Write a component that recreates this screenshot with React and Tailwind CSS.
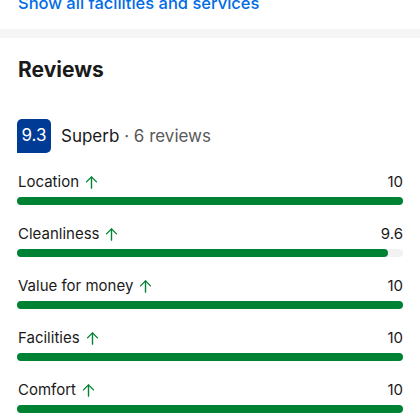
import React from "react";

const scores = [
  { label: "Location", value: "10", pct: 100 },
  { label: "Cleanliness", value: "9.6", pct: 96 },
  { label: "Value for money", value: "10", pct: 100 },
  { label: "Facilities", value: "10", pct: 100 },
  { label: "Comfort", value: "10", pct: 100 },
];

function ArrowUp() {
  return (
    <svg
      width="15"
      height="15"
      viewBox="0 0 24 24"
      fill="none"
      stroke="#008234"
      strokeWidth="2.2"
      strokeLinecap="round"
      strokeLinejoin="round"
    >
      <path d="M12 21V3" />
      <path d="M4 11l8-8 8 8" />
    </svg>
  );
}

export default function App() {
  return (
    <div
      className="w-[420px] h-[420px] overflow-hidden bg-white text-[#1a1a1a]"
      style={{ fontFamily: "Inter, 'Liberation Sans', sans-serif" }}
    >
      <div className="px-[18px] -mt-[9px] pb-[14px]">
        <span className="text-[16.5px] leading-[24px] font-medium text-[#006ce4]">
          Show all facilities and services
        </span>
      </div>

      <div className="h-[9px] bg-[#f5f5f5]" />

      <div className="px-[17px] pt-[18px]">
        <h2 className="text-[21px] leading-[28px] font-bold pl-px">Reviews</h2>

        <div className="mt-[35px] flex items-center gap-[10px]">
          <div className="w-[34px] h-[34px] bg-[#003b95] text-white rounded-[5px] rounded-bl-none flex items-center justify-center text-[17px]">
            9.3
          </div>
          <div className="text-[17px] leading-[24px]">
            Superb <span className="text-[#595959]">· 6 reviews</span>
          </div>
        </div>

        <div className="mt-[17px] flex flex-col gap-[17px]">
          {scores.map((s) => (
            <div key={s.label}>
              <div className="flex items-center justify-between text-[15px] leading-[24px] pl-px">
                <div className="flex items-center gap-[5px]">
                  <span>{s.label}</span>
                  <ArrowUp />
                </div>
                <span>{s.value}</span>
              </div>
              <div className="mt-[3px] h-[8px] rounded-full bg-[#f2f2f2]">
                <div
                  className="h-full rounded-full bg-[#008234]"
                  style={{ width: `${s.pct}%` }}
                />
              </div>
            </div>
          ))}
        </div>
      </div>
    </div>
  );
}
